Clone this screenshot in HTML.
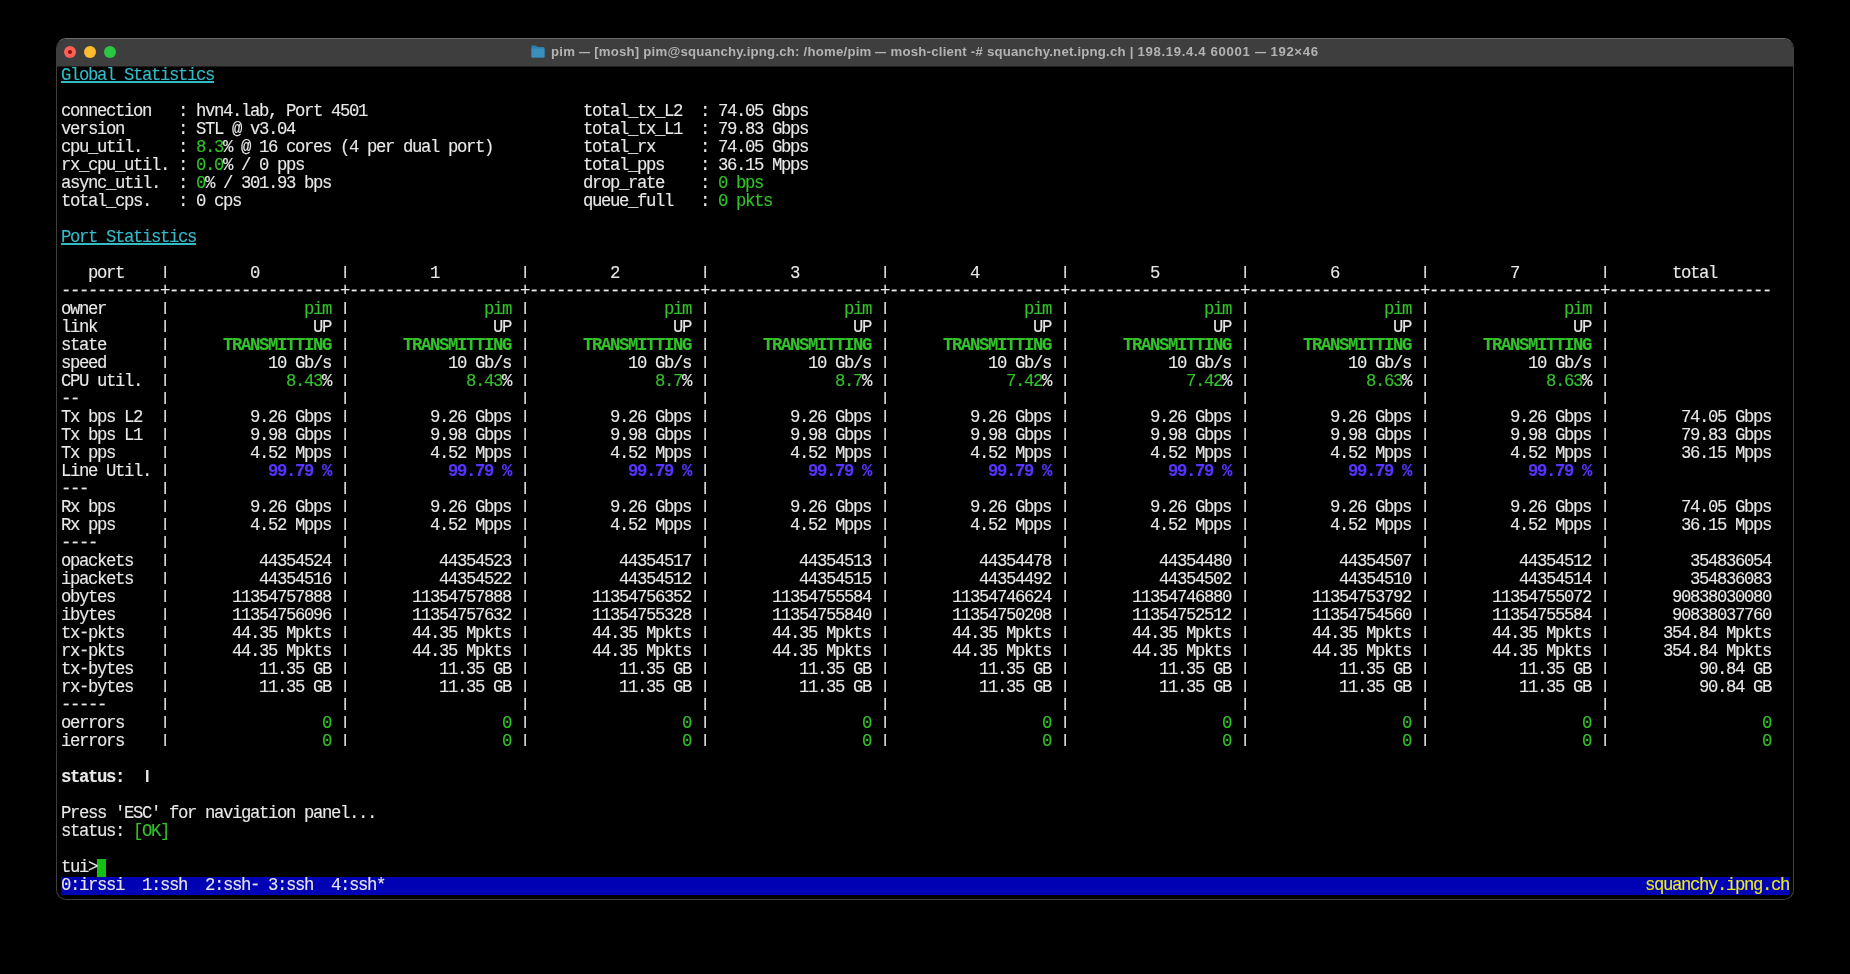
<!DOCTYPE html>
<html><head><meta charset="utf-8"><style>
html,body{margin:0;padding:0;background:#000;width:1850px;height:974px;overflow:hidden}
#win{position:absolute;left:56px;top:38px;width:1736px;height:860px;border:1px solid #3e3e3e;border-top-color:#6b6b6b;border-radius:10px;background:#000;overflow:hidden}
#tb{position:absolute;left:0;top:0;width:100%;height:27px;background:#3d3e3d;border-bottom:1px solid #1e1e1e}
.tl{position:absolute;top:6.6px;width:12.6px;height:12.6px;border-radius:50%}
.red{left:6.7px;background:#fe5f57}
.red i{position:absolute;left:4.3px;top:4.3px;width:4px;height:4px;border-radius:50%;background:#8a0e06}
.yel{left:26.7px;background:#febc2e}
.grn{left:46.7px;background:#28c840}
#title{position:absolute;left:474px;top:5px;font-family:"Liberation Sans",sans-serif;font-weight:bold;font-size:13.2px;letter-spacing:0.218px;color:#b3b3b3;white-space:nowrap;line-height:16px;will-change:transform}
.fold{display:inline-block;vertical-align:-2px;margin-right:6px}
#term{position:absolute;left:4px;top:28px;width:1728px;height:828px;font-family:"Liberation Mono",monospace;font-size:17.3px;letter-spacing:-1.3705px;color:#e8e8e8;will-change:transform;-webkit-text-stroke:0.12px}
.r{position:absolute;left:-0.1px;transform:scaleY(1.04);transform-origin:0 14px;margin-top:0.4px;height:18px;line-height:18px;white-space:pre}
.g{color:#33c22a}
.gb{color:#33c22a;font-weight:bold}
.bb{color:#5833ff;font-weight:bold}
.b{font-weight:bold}
.ul{color:#33bbc8}

.sbt{color:#e6e6e6}
.sby{color:#eaec23}
.bg{position:absolute}
.p{display:inline-block;width:9px;height:12.1px;overflow:hidden;vertical-align:top;position:relative;top:0.5px}
.em{display:inline-block;width:11.3px;transform:scaleX(0.84);transform-origin:0 50%}
.tb{letter-spacing:0.645px}

</style></head><body>
<div id="win">
<div id="tb"><div class="tl red"><i></i></div><div class="tl yel"></div><div class="tl grn"></div>
<div id="title"><span class="fold"><svg width="14" height="13" viewBox="0 0 14 13"><path d="M0.5 1.5 Q0.5 0.5 1.5 0.5 H5 L6.3 2 H12.5 Q13.5 2 13.5 3 V11.5 Q13.5 12.5 12.5 12.5 H1.5 Q0.5 12.5 0.5 11.5 Z" fill="#2f7fae"/><path d="M0.5 3.5 H13.5 V11.5 Q13.5 12.5 12.5 12.5 H1.5 Q0.5 12.5 0.5 11.5 Z" fill="#3a8fbd"/></svg></span>pim <span class="em">—</span> [mosh] pim@squanchy.ipng.ch: /home/pim <span class="em">—</span> mosh-client -# squanchy.net.ipng.ch | <span class="tb">198.19.4.4 60001 <span class="em">—</span> 192×46</span></div></div>
<div id="term">
<div class="bg" style="left:0;top:810px;width:1728px;height:18px;background:#0000b4"></div>
<div class="bg" style="left:36px;top:792px;width:9px;height:18px;background:#14c014"></div>
<div class="bg" style="left:0;top:14px;width:153px;height:2px;background:#33bbc8"></div>
<div class="bg" style="left:0;top:176px;width:135px;height:2px;background:#33bbc8"></div>
<div class="r" style="top:0px"><span class="ul">Global Statistics</span></div>
<div class="r" style="top:18px"></div>
<div class="r" style="top:36px">connection   : hvn4.lab, Port 4501                        total_tx_L2  : 74.05 Gbps</div>
<div class="r" style="top:54px">version      : STL @ v3.04                                total_tx_L1  : 79.83 Gbps</div>
<div class="r" style="top:72px">cpu_util.    : <span class="g">8.3</span>% @ 16 cores (4 per dual port)          total_rx     : 74.05 Gbps</div>
<div class="r" style="top:90px">rx_cpu_util. : <span class="g">0.0</span>% / 0 pps                               total_pps    : 36.15 Mpps</div>
<div class="r" style="top:108px">async_util.  : <span class="g">0</span>% / 301.93 bps                            drop_rate    : <span class="g">0 bps</span></div>
<div class="r" style="top:126px">total_cps.   : 0 cps                                      queue_full   : <span class="g">0 pkts</span></div>
<div class="r" style="top:144px"></div>
<div class="r" style="top:162px"><span class="ul">Port Statistics</span></div>
<div class="r" style="top:180px"></div>
<div class="r" style="top:198px">   port    <span class="p">|</span>         0         <span class="p">|</span>         1         <span class="p">|</span>         2         <span class="p">|</span>         3         <span class="p">|</span>         4         <span class="p">|</span>         5         <span class="p">|</span>         6         <span class="p">|</span>         7         <span class="p">|</span>       total       </div>
<div class="r" style="top:216px">-----------+-------------------+-------------------+-------------------+-------------------+-------------------+-------------------+-------------------+-------------------+------------------</div>
<div class="r" style="top:234px">owner      <span class="p">|</span>               <span class="g">pim</span> <span class="p">|</span>               <span class="g">pim</span> <span class="p">|</span>               <span class="g">pim</span> <span class="p">|</span>               <span class="g">pim</span> <span class="p">|</span>               <span class="g">pim</span> <span class="p">|</span>               <span class="g">pim</span> <span class="p">|</span>               <span class="g">pim</span> <span class="p">|</span>               <span class="g">pim</span> <span class="p">|</span></div>
<div class="r" style="top:252px">link       <span class="p">|</span>                UP <span class="p">|</span>                UP <span class="p">|</span>                UP <span class="p">|</span>                UP <span class="p">|</span>                UP <span class="p">|</span>                UP <span class="p">|</span>                UP <span class="p">|</span>                UP <span class="p">|</span></div>
<div class="r" style="top:270px">state      <span class="p">|</span>      <span class="gb">TRANSMITTING</span> <span class="p">|</span>      <span class="gb">TRANSMITTING</span> <span class="p">|</span>      <span class="gb">TRANSMITTING</span> <span class="p">|</span>      <span class="gb">TRANSMITTING</span> <span class="p">|</span>      <span class="gb">TRANSMITTING</span> <span class="p">|</span>      <span class="gb">TRANSMITTING</span> <span class="p">|</span>      <span class="gb">TRANSMITTING</span> <span class="p">|</span>      <span class="gb">TRANSMITTING</span> <span class="p">|</span></div>
<div class="r" style="top:288px">speed      <span class="p">|</span>           10 Gb/s <span class="p">|</span>           10 Gb/s <span class="p">|</span>           10 Gb/s <span class="p">|</span>           10 Gb/s <span class="p">|</span>           10 Gb/s <span class="p">|</span>           10 Gb/s <span class="p">|</span>           10 Gb/s <span class="p">|</span>           10 Gb/s <span class="p">|</span></div>
<div class="r" style="top:306px">CPU util.  <span class="p">|</span>             <span class="g">8.43</span>% <span class="p">|</span>             <span class="g">8.43</span>% <span class="p">|</span>              <span class="g">8.7</span>% <span class="p">|</span>              <span class="g">8.7</span>% <span class="p">|</span>             <span class="g">7.42</span>% <span class="p">|</span>             <span class="g">7.42</span>% <span class="p">|</span>             <span class="g">8.63</span>% <span class="p">|</span>             <span class="g">8.63</span>% <span class="p">|</span></div>
<div class="r" style="top:324px">--         <span class="p">|</span>                   <span class="p">|</span>                   <span class="p">|</span>                   <span class="p">|</span>                   <span class="p">|</span>                   <span class="p">|</span>                   <span class="p">|</span>                   <span class="p">|</span>                   <span class="p">|</span></div>
<div class="r" style="top:342px">Tx bps L2  <span class="p">|</span>         9.26 Gbps <span class="p">|</span>         9.26 Gbps <span class="p">|</span>         9.26 Gbps <span class="p">|</span>         9.26 Gbps <span class="p">|</span>         9.26 Gbps <span class="p">|</span>         9.26 Gbps <span class="p">|</span>         9.26 Gbps <span class="p">|</span>         9.26 Gbps <span class="p">|</span>        74.05 Gbps</div>
<div class="r" style="top:360px">Tx bps L1  <span class="p">|</span>         9.98 Gbps <span class="p">|</span>         9.98 Gbps <span class="p">|</span>         9.98 Gbps <span class="p">|</span>         9.98 Gbps <span class="p">|</span>         9.98 Gbps <span class="p">|</span>         9.98 Gbps <span class="p">|</span>         9.98 Gbps <span class="p">|</span>         9.98 Gbps <span class="p">|</span>        79.83 Gbps</div>
<div class="r" style="top:378px">Tx pps     <span class="p">|</span>         4.52 Mpps <span class="p">|</span>         4.52 Mpps <span class="p">|</span>         4.52 Mpps <span class="p">|</span>         4.52 Mpps <span class="p">|</span>         4.52 Mpps <span class="p">|</span>         4.52 Mpps <span class="p">|</span>         4.52 Mpps <span class="p">|</span>         4.52 Mpps <span class="p">|</span>        36.15 Mpps</div>
<div class="r" style="top:396px">Line Util. <span class="p">|</span>           <span class="bb">99.79 %</span> <span class="p">|</span>           <span class="bb">99.79 %</span> <span class="p">|</span>           <span class="bb">99.79 %</span> <span class="p">|</span>           <span class="bb">99.79 %</span> <span class="p">|</span>           <span class="bb">99.79 %</span> <span class="p">|</span>           <span class="bb">99.79 %</span> <span class="p">|</span>           <span class="bb">99.79 %</span> <span class="p">|</span>           <span class="bb">99.79 %</span> <span class="p">|</span></div>
<div class="r" style="top:414px">---        <span class="p">|</span>                   <span class="p">|</span>                   <span class="p">|</span>                   <span class="p">|</span>                   <span class="p">|</span>                   <span class="p">|</span>                   <span class="p">|</span>                   <span class="p">|</span>                   <span class="p">|</span></div>
<div class="r" style="top:432px">Rx bps     <span class="p">|</span>         9.26 Gbps <span class="p">|</span>         9.26 Gbps <span class="p">|</span>         9.26 Gbps <span class="p">|</span>         9.26 Gbps <span class="p">|</span>         9.26 Gbps <span class="p">|</span>         9.26 Gbps <span class="p">|</span>         9.26 Gbps <span class="p">|</span>         9.26 Gbps <span class="p">|</span>        74.05 Gbps</div>
<div class="r" style="top:450px">Rx pps     <span class="p">|</span>         4.52 Mpps <span class="p">|</span>         4.52 Mpps <span class="p">|</span>         4.52 Mpps <span class="p">|</span>         4.52 Mpps <span class="p">|</span>         4.52 Mpps <span class="p">|</span>         4.52 Mpps <span class="p">|</span>         4.52 Mpps <span class="p">|</span>         4.52 Mpps <span class="p">|</span>        36.15 Mpps</div>
<div class="r" style="top:468px">----       <span class="p">|</span>                   <span class="p">|</span>                   <span class="p">|</span>                   <span class="p">|</span>                   <span class="p">|</span>                   <span class="p">|</span>                   <span class="p">|</span>                   <span class="p">|</span>                   <span class="p">|</span></div>
<div class="r" style="top:486px">opackets   <span class="p">|</span>          44354524 <span class="p">|</span>          44354523 <span class="p">|</span>          44354517 <span class="p">|</span>          44354513 <span class="p">|</span>          44354478 <span class="p">|</span>          44354480 <span class="p">|</span>          44354507 <span class="p">|</span>          44354512 <span class="p">|</span>         354836054</div>
<div class="r" style="top:504px">ipackets   <span class="p">|</span>          44354516 <span class="p">|</span>          44354522 <span class="p">|</span>          44354512 <span class="p">|</span>          44354515 <span class="p">|</span>          44354492 <span class="p">|</span>          44354502 <span class="p">|</span>          44354510 <span class="p">|</span>          44354514 <span class="p">|</span>         354836083</div>
<div class="r" style="top:522px">obytes     <span class="p">|</span>       11354757888 <span class="p">|</span>       11354757888 <span class="p">|</span>       11354756352 <span class="p">|</span>       11354755584 <span class="p">|</span>       11354746624 <span class="p">|</span>       11354746880 <span class="p">|</span>       11354753792 <span class="p">|</span>       11354755072 <span class="p">|</span>       90838030080</div>
<div class="r" style="top:540px">ibytes     <span class="p">|</span>       11354756096 <span class="p">|</span>       11354757632 <span class="p">|</span>       11354755328 <span class="p">|</span>       11354755840 <span class="p">|</span>       11354750208 <span class="p">|</span>       11354752512 <span class="p">|</span>       11354754560 <span class="p">|</span>       11354755584 <span class="p">|</span>       90838037760</div>
<div class="r" style="top:558px">tx-pkts    <span class="p">|</span>       44.35 Mpkts <span class="p">|</span>       44.35 Mpkts <span class="p">|</span>       44.35 Mpkts <span class="p">|</span>       44.35 Mpkts <span class="p">|</span>       44.35 Mpkts <span class="p">|</span>       44.35 Mpkts <span class="p">|</span>       44.35 Mpkts <span class="p">|</span>       44.35 Mpkts <span class="p">|</span>      354.84 Mpkts</div>
<div class="r" style="top:576px">rx-pkts    <span class="p">|</span>       44.35 Mpkts <span class="p">|</span>       44.35 Mpkts <span class="p">|</span>       44.35 Mpkts <span class="p">|</span>       44.35 Mpkts <span class="p">|</span>       44.35 Mpkts <span class="p">|</span>       44.35 Mpkts <span class="p">|</span>       44.35 Mpkts <span class="p">|</span>       44.35 Mpkts <span class="p">|</span>      354.84 Mpkts</div>
<div class="r" style="top:594px">tx-bytes   <span class="p">|</span>          11.35 GB <span class="p">|</span>          11.35 GB <span class="p">|</span>          11.35 GB <span class="p">|</span>          11.35 GB <span class="p">|</span>          11.35 GB <span class="p">|</span>          11.35 GB <span class="p">|</span>          11.35 GB <span class="p">|</span>          11.35 GB <span class="p">|</span>          90.84 GB</div>
<div class="r" style="top:612px">rx-bytes   <span class="p">|</span>          11.35 GB <span class="p">|</span>          11.35 GB <span class="p">|</span>          11.35 GB <span class="p">|</span>          11.35 GB <span class="p">|</span>          11.35 GB <span class="p">|</span>          11.35 GB <span class="p">|</span>          11.35 GB <span class="p">|</span>          11.35 GB <span class="p">|</span>          90.84 GB</div>
<div class="r" style="top:630px">-----      <span class="p">|</span>                   <span class="p">|</span>                   <span class="p">|</span>                   <span class="p">|</span>                   <span class="p">|</span>                   <span class="p">|</span>                   <span class="p">|</span>                   <span class="p">|</span>                   <span class="p">|</span></div>
<div class="r" style="top:648px">oerrors    <span class="p">|</span>                 <span class="g">0</span> <span class="p">|</span>                 <span class="g">0</span> <span class="p">|</span>                 <span class="g">0</span> <span class="p">|</span>                 <span class="g">0</span> <span class="p">|</span>                 <span class="g">0</span> <span class="p">|</span>                 <span class="g">0</span> <span class="p">|</span>                 <span class="g">0</span> <span class="p">|</span>                 <span class="g">0</span> <span class="p">|</span>                 <span class="g">0</span></div>
<div class="r" style="top:666px">ierrors    <span class="p">|</span>                 <span class="g">0</span> <span class="p">|</span>                 <span class="g">0</span> <span class="p">|</span>                 <span class="g">0</span> <span class="p">|</span>                 <span class="g">0</span> <span class="p">|</span>                 <span class="g">0</span> <span class="p">|</span>                 <span class="g">0</span> <span class="p">|</span>                 <span class="g">0</span> <span class="p">|</span>                 <span class="g">0</span> <span class="p">|</span>                 <span class="g">0</span></div>
<div class="r" style="top:684px"></div>
<div class="r" style="top:702px"><span class="b">status:  <span class="p">|</span></span></div>
<div class="r" style="top:720px"></div>
<div class="r" style="top:738px">Press &#x27;ESC&#x27; for navigation panel...</div>
<div class="r" style="top:756px">status: <span class="g">[OK]</span></div>
<div class="r" style="top:774px"></div>
<div class="r" style="top:792px">tui&gt;</div>
<div class="r" style="top:810px"><span class="sbt">0:irssi  1:ssh  2:ssh- 3:ssh  4:ssh*</span>                                                                                                                                            <span class="sby">squanchy.ipng.ch</span></div>
</div></div>
</body></html>
